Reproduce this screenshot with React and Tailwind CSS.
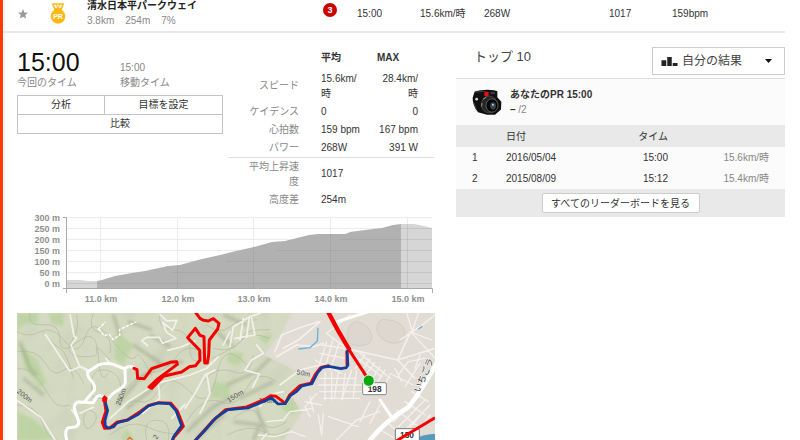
import React from "react";

const leaders = [
  { rank: 1, date: "2016/05/04", time: "15:00", speed: "15.6km/時" },
  { rank: 2, date: "2015/08/09", time: "15:12", speed: "15.4km/時" },
];

function Medal() {
  return (
    <svg viewBox="0 0 48 63" className="h-[21px] w-4" role="img" aria-label="PR">
      <path d="M5 1h38l-9 23H14z" fill="#fdbb1c" />
      <path d="M11 5h7l4 10h-6zM37 5h-7l-4 10h6zM20 5h8l-4 8z" fill="#fff6d8" />
      <circle cx="24" cy="40" r="22" fill="#fdb913" />
      <text x="24" y="48" textAnchor="middle" fontSize="21" fontWeight="bold" fill="#fff">PR</text>
    </svg>
  );
}

function Camera() {
  return (
    <svg viewBox="0 0 90 80" className="h-[27px] w-[30px]" aria-hidden="true">
      <path d="M8 7Q30 0 66 3l10 3v18l12 14-1 23-18 16-24 0-27-8Q1 48 2 26z" fill="#101010" />
      <path d="M9 9l30-3M5 40l8 20" stroke="#444" strokeWidth="3" />
      <circle cx="14" cy="30" r="4" fill="#ddd" />
      <rect x="37" y="8" width="13" height="13" rx="3" fill="#e1121b" />
      <path d="M55 8h14v7H55z" fill="#3b3b3b" />
      <ellipse cx="52" cy="46" rx="24" ry="25" fill="#262626" stroke="#555" strokeWidth="2" />
      <ellipse cx="60" cy="49" rx="18" ry="20" fill="#060606" stroke="#777" strokeWidth="2" />
      <ellipse cx="63" cy="50" rx="9" ry="11" fill="#35434a" />
      <path d="M59 43l7 3-3 6z" fill="#dbe6e8" />
      <path d="M33 30l10-6M30 42l-1 10" stroke="#999" strokeWidth="3" />
    </svg>
  );
}

function ActivityRow() {
  return (
    <header className="grid h-[33px] grid-cols-[33px_37px_236px_34px_63px_64px_125px_63px_1fr] border-b-2 border-[#e9e9e9] pl-[14px]">
      <div className="flex h-[28px] items-center pl-px text-[#999]">
        <svg viewBox="0 0 24 24" className="h-[10px] w-[10px]" fill="currentColor" aria-hidden="true">
          <path d="M12 0l3.300 8.300L24 9l-6.700 5.600L19.500 23 12 18.300 4.500 23l2.200-8.400L0 9l8.700-.7z" />
        </svg>
      </div>
      <div className="flex h-[27px] items-center"><Medal /></div>
      <div>
        <h1 className="text-[10px] font-bold leading-[11px] text-[#222]">清水日本平パークウェイ</h1>
        <p className="flex gap-[11px] leading-5 text-[#888]"><span>3.8km</span><span>254m</span><span>7%</span></p>
      </div>
      <div className="flex h-5 items-center">
        <span className="flex h-[14px] w-[14px] items-center justify-center rounded-full bg-[#c90000] text-[9px] font-bold text-white">3</span>
      </div>
      <span className="leading-[27px]">15:00</span>
      <span className="leading-[27px]">15.6km/時</span>
      <span className="leading-[27px]">268W</span>
      <span className="leading-[27px]">1017</span>
      <span className="leading-[27px]">159bpm</span>
    </header>
  );
}

function Times() {
  return (
    <section className="w-[206px] pt-[15px]">
      <div className="grid grid-cols-2 items-end">
        <strong className="text-[25px] font-normal leading-7 text-[#111]">15:00</strong>
        <span className="leading-4 text-[#888]">15:00</span>
      </div>
      <div className="grid grid-cols-2 leading-[14px] text-[#888]">
        <span>今回のタイム</span>
        <span>移動タイム</span>
      </div>
      <div className="mt-[5px] grid grid-cols-[86px_1fr] gap-px border border-[#c4c4c4] bg-[#c4c4c4] leading-4">
        <button type="button" className="h-[18px] bg-white">分析</button>
        <button type="button" className="h-[18px] bg-white">目標を設定</button>
        <button type="button" className="col-span-2 h-[18px] bg-white">比較</button>
      </div>
    </section>
  );
}

function Stats() {
  return (
    <table className="mt-[13px] w-[205px] table-fixed leading-[15px]">
      <thead>
        <tr className="h-[23px] align-top text-left">
          <td className="w-[92px]" />
          <th scope="col" className="w-[48px] pt-1 font-bold">平均</th>
          <th scope="col" className="w-[65px] pl-2 pt-1 font-bold">MAX</th>
        </tr>
      </thead>
      <tbody>
        <tr className="h-[33px]">
          <th scope="row" className="pr-[22px] text-right font-normal text-[#888]">スピード</th>
          <td>15.6km/<br />時</td>
          <td className="pr-4 text-right">28.4km/<br />時</td>
        </tr>
        <tr className="h-[18px]">
          <th scope="row" className="pr-[22px] text-right font-normal text-[#888]">ケイデンス</th>
          <td>0</td>
          <td className="pr-4 text-right">0</td>
        </tr>
        <tr className="h-[18px]">
          <th scope="row" className="pr-[22px] text-right font-normal text-[#888]">心拍数</th>
          <td className="whitespace-nowrap">159 bpm</td>
          <td className="whitespace-nowrap pr-4 text-right">167 bpm</td>
        </tr>
        <tr className="h-[19px] border-b border-[#ddd]">
          <th scope="row" className="pr-[22px] text-right font-normal text-[#888]">パワー</th>
          <td>268W</td>
          <td className="pr-4 text-right">391 W</td>
        </tr>
        <tr className="h-[33px]">
          <th scope="row" className="pr-[22px] text-right font-normal text-[#888]">平均上昇速<br />度</th>
          <td>1017</td>
          <td />
        </tr>
        <tr className="h-[18px]">
          <th scope="row" className="pr-[22px] text-right font-normal text-[#888]">高度差</th>
          <td>254m</td>
          <td />
        </tr>
      </tbody>
    </table>
  );
}

function Elevation() {
  const levels = [300, 250, 200, 150, 100, 50, 0];
  const marks = [["11.0 km", 101], ["12.0 km", 178], ["13.0 km", 254], ["14.0 km", 331], ["15.0 km", 408]];
  return (
    <svg viewBox="17 208 418 105" className="block w-full" role="img" aria-label="標高">
      <g stroke="#ececec" strokeWidth="1">
        {levels.map((v, i) => <path key={v} d={`M67 ${217.5 + i * 11}H432`} />)}
        {marks.map(([t, x]) => <path key={t} d={`M${x - 0.5} 217V288`} />)}
      </g>
      <path d="M67 280L79 280 89 281 97 281V288H67z" fill="#d6d6d6" />
      <path d="M97 281L102 280 115 276 132 273 145 271 168 266 180 265 198 260 220 255 236 251 254 247 272 242 285 241 309 235 318 234 345 234 348 233 350 232 365 230 382 228 393 225 401 224V288H97z" fill="#b1b1b1" />
      <path d="M401 224L414 224 424 226 432 228V288H401z" fill="#d6d6d6" />
      <g stroke="#888" strokeOpacity=".22" strokeWidth="1">
        <path d="M401 228.500H432M340 239.500H432M277 250.500H432M226 261.500H432M172 272.500H432M67 283.500H432M177.500 265V288M253.500 247V288M330.500 234V288M407.500 224V288" />
      </g>
      <path d="M63 217.500H67M66.500 217V293M63 288.500H432.500V293" fill="none" stroke="#aaa" />
      <g fill="#909090" fontSize="9" fontWeight="bold">
        {levels.map((v, i) => <text key={v} x="60" y={221 + i * 11} textAnchor="end">{v} m</text>)}
        {marks.map(([t, x]) => <text key={t} x={x} y="302" textAnchor="middle">{t}</text>)}
      </g>
    </svg>
  );
}

function RouteMap() {
  return (
    <svg viewBox="51 24 1254 381" className="block w-full" role="img" aria-label="ルートマップ">
      <defs>
        <filter id="soft" x="-20%" y="-20%" width="140%" height="140%"><feGaussianBlur stdDeviation="5" /></filter>
        <filter id="relief" x="0" y="0" width="100%" height="100%">
          <feTurbulence type="fractalNoise" baseFrequency="0.010 0.008" numOctaves="2" seed="8" />
          <feColorMatrix values="0 0 0 0 0  0 0 0 0 0  0 0 0 0 0  1 0 0 0 0" />
          <feDiffuseLighting surfaceScale="30" lightingColor="#e4e8d2"><feDistantLight azimuth="225" elevation="65" /></feDiffuseLighting>
        </filter>
        <clipPath id="hills"><path d="M51 24H875L845 80 790 150 880 195 930 235 870 270 905 320 850 405H51z" /></clipPath>
      </defs>
      <rect x="51" y="24" width="1254" height="381" fill="#e1dcd4" />
      <path d="M51 24H875L845 80 790 150 880 195 930 235 870 270 905 320 850 405H51z" fill="#d3d9bf" filter="url(#soft)" />
      <g clipPath="url(#hills)">
        <rect x="51" y="24" width="860" height="381" fill="#d3d9bf" />
        <rect x="51" y="24" width="860" height="381" filter="url(#relief)" opacity=".14" />
        <g fill="#b7d29c" opacity=".75" filter="url(#soft)">
          <path d="M51 24h60l5 26-50 10-15 20zM145 24h45v40l-35-8zM60 120l50 45 30 70-20 15-45-60zM350 80l50 40-30 60-28-20zM80 190l45 20-20 20zM51 320l45 20 70 65H51zM640 230l50 10v40h-60zM770 95l50-8-20 30zM690 140l40 5-10 35-40-10zM840 310l45-45 10 50-20 15zM380 370l25 35h-45z" />
        </g>
        <g fill="none" stroke="#8e9978" strokeWidth="10" opacity=".42" filter="url(#soft)">
          <path d="M340 30l20 60M385 50l70 25M450 90l60 35M350 300l70-80 60-40 70-10M380 310l80-60M560 380l80-75 50-25M590 400l80-70M680 240l90-40 80-80M720 280l100-50M700 350l80 10-20 45M650 80l50 45M60 110l30 80 20 20M70 220l60 50M400 120l90 60M740 60l-70-30M770 310l30 80" />
        </g>
        <g fill="none" stroke="#aab399" strokeWidth="2" opacity=".8">
          <path d="M51 80q35 20 70 0t75 30 60-15 80 10 70 50 50 60M90 24q-10 40 40 35t50 45 55 5 60 45 30 50M51 140q60-10 85 35t55 20 60 40M51 190q45 0 70 40t40 60 50 10M280 24q-20 50 20 60t30 60M230 30q10 40-15 80t30 45 45-20 40 30" />
          <path d="M275 225q5-35 40-30t45 35-35 45-50-10zM250 340q10-35 30-20t-3 42-27-22zM350 320q40-40 70-30t60-40 90 10 80-50 90-30M330 390q60-50 110-25t100 20M440 405q-15-60 30-60t35 60M370 270q30-60 80-65t80-50 80-10M480 24q-10 50 40 50t50 60 80 20 80-60 80-20M620 60q40 30 70 5t80-20M640 130q55 15 80-20t90-10M610 230q40-50 90-30t60-50M560 350q50-80 100-60t80-40 90-20M700 340q60-50 80 0t80 10M680 390q70-35 110-10t80-10M51 300q60 0 75 50t45 55M130 80q30 40 50 50t40 90" />
        </g>
      </g>
      <g fill="#ddd8cf" stroke="#cbc6be" strokeWidth="2"><path d="M1130 75q0-40 35-30 42 3 50 35 2 35-35 35-40-5-50-40zM1040 90q10-50 40-38t35 40-35 30-40-32z" /></g>

      <g fill="none" stroke="#f4f1ed" strokeLinejoin="round" strokeLinecap="round">
        <g strokeWidth="5">
          <path d="M210 28L222 94 230 98 213 120 238 182 263 194M136 88L209 198 240 185 263 198M317 160L332 178M51 286L123 337 165 405" />
          <path d="M480 28L500 48 530 46 518 76 488 52 500 82 528 100 488 115 478 97 440 97 425 107 443 122M503 136L543 126 585 108M690 80L670 120M330 340L385 290 470 235 570 210 620 190 655 155M620 205L630 265 600 325M475 235L479 280 429 325M240 325L280 307M555 310L585 265 615 210 645 195M240 350L215 315M515 340L555 298" />
          <path d="M690 125l10-60 50-30 30-10M705 100l60-10-10-50M720 105l10-65M740 97l8-60M735 195l20-30 35-20-20-25M738 197l40 10-20 40M825 140l20-50 50-20 60-20M850 130l45-25 65-55M830 155l60-35 50 5 30-10M850 260l-25 5-30 15-15 25M840 240l60-45 60-15" />
        </g>
        <g strokeWidth="4">
          <path d="M965 120l70 10M960 145l75 15M945 165l80 40M1000 100l-25 90M1018 115l-28 80M980 110l-22 70M975 200l0 85M995 200l0 85M1015 200l-12 80M1035 205l-8 75M960 220h110M955 240h130M960 260h125M970 280h110M1055 195l-30 90M1070 195l-10 80M950 265l-35 40 15 30M930 275l10 45M915 290l50 10M800 350l50-5 20-25 70-10M775 390l50 5 50-15 40 15M800 385l-15 20M955 330l10 60M970 325l-5 60M985 335l90 30M1010 405l60-60 70-25" />
          <path d="M1060 150l85 65M1080 145l90 75M1094 150l-28 40M1110 160l-28 45M1125 172l-30 40M1140 185l-25 40M1155 195l-25 40M1170 210l-25 45M1130 265h-25M1110 290l-30 60M1140 300l-30 55M1180 350l80-80M1195 365l80-80M1210 380l80-80M1160 350l60 55M1190 315l65 50M1215 290l60 40M1235 260l50 30M1270 320l-70 85M1290 330l-55 75M1140 375l55 30" />
          <path d="M1040 130l-60-45 70-55M1220 24l20 65 65 70M1200 105l60-40 45-35M1235 85l20-60M1230 80l65 25M1195 210l30-40 50-10M1205 230l-20-40M1215 245l45-70M1170 205l70 35M1260 150l-15 40" />
        </g>
        <path d="M1048 133L1193 165 1305 130M1193 165L1230 84M1193 165L1245 220" strokeWidth="5" />
      </g>
      <g fill="none" stroke="#fff" strokeLinejoin="round" strokeLinecap="round">
        <path d="M400 186Q374 182 375 196L376 232Q375 245 345 261 332 270 325 281 315 276 300 271 290 272 280 293L235 291Q221 296 223 311L235 346Q239 362 225 366L203 369Q193 378 200 405" strokeWidth="9" />
        <path d="M375 192L340 178Q315 172 295 180L263 201Q262 210 267 219L280 235Q286 247 283 256L255 289M1005 52L1115 17M1140 285L1172 332" strokeWidth="9" />
        <path d="M1110 405Q1160 345 1225 307 1255 270 1320 159" strokeWidth="14" />
        <path d="M295 72l20-20M297 72l15 20 16-4 10 16 22-14-2-16 50-23" strokeWidth="4" strokeDasharray="7 7" />
      </g>
      <g fill="none" stroke="#68b0e0" strokeWidth="4" strokeLinejoin="round"><path d="M895 132L930 128 952 108 954 68M1255 72l12-8" /></g>
      <path d="M1235 405q40-20 70-18v18z" fill="#5599bd" />

      <g fill="#555" fontSize="21">
        <text transform="translate(49 262) rotate(38)">200m</text>
        <text transform="translate(360 302) rotate(-69)">250m</text>
        <text transform="translate(687 293) rotate(-32)">150m</text>
        <text transform="translate(889 208) rotate(10)">50m</text>
        <text transform="translate(776 295)">100m</text>
        <text transform="translate(470 404) rotate(-60)">2</text>
      </g>
      <path d="M382 405l7-8 9 8" fill="none" stroke="#ee6a25" strokeWidth="4" />
      <g fill="none" stroke="#f50000" strokeWidth="9" strokeLinejoin="round" strokeLinecap="round">
        <path d="M588 24L600 40 611 46 625 48 640 41 657 55 653 72 628 105 626 150 622 174 614 174 612 95 600 91 586 70 563 98 599 136 600 165 587 182 568 185 545 201 490 214 455 250 447 246 475 220 532 178 530 170 514 171 455 191 433 221 413 220 411 194 402 190" />
        <path d="M313 285L318 318 307 352 314 370 330 369 350 352 382 345 420 320 447 301 475 293 513 295 532 318 550 364 520 399 518 412M583 410L640 346 677 314 740 306 792 284 812 272 828 274 856 295M856 295L869 270 900 242 932 235 946 208 962 188 985 182M1045 131L1105 223M1041 180V140" />
        <path d="M984 20l32 60 31 52" strokeWidth="13" />
      </g>
      <path d="M316 292L323 316 315 346 316 362 323 369 340 366 352 353 383 345 415 328 445 303 475 294 509 296 528 317 545 362 522 393 514 412M582 410L613 378 648 338 684 314 744 309 801 285 814 278 834 297 855 296 871 272 888 261 905 243 936 236 953 203 967 187 986 184 1023 191 1039 188 1044 180 1041 139" fill="none" stroke="#123e9e" strokeWidth="8" strokeLinejoin="round" strokeLinecap="round" />
      <path d="M313 270l10 8-3 14-13-2-1-10z" fill="#f50000" />
      <rect x="1088" y="233" width="71" height="36" rx="4" fill="#fff" stroke="#888" strokeWidth="3" />
      <text x="1124" y="261" textAnchor="middle" fontSize="25" fontWeight="bold" fill="#333">198</text>
      <rect x="1186" y="371" width="72" height="42" rx="4" fill="#fff" stroke="#777" strokeWidth="3" />
      <text x="1221" y="398" textAnchor="middle" fontSize="25" fontWeight="bold" fill="#333">150</text>
      <path d="M1190 407l115-69" stroke="#f50000" strokeWidth="9" />
      <circle cx="1106" cy="227" r="17" fill="#07aa0b" stroke="#fff" strokeWidth="3" />
      <text transform="translate(1258 264) rotate(-66)" fontSize="27" fill="#333" stroke="#fff" strokeWidth="3" paintOrder="stroke">いちごラ</text>
    </svg>
  );
}

function Leaderboard() {
  return (
    <section className="min-w-0 flex-1 pt-[14px]">
      <div className="flex h-[31px] justify-between pl-[18px]">
        <h2 className="text-[13px] leading-5 text-[#444]">トップ 10</h2>
        <div className="grid h-[28px] w-[133px] grid-cols-1 items-center border border-[#ccc] bg-white">
          <select aria-label="結果" className="col-start-1 row-start-1 h-[26px] w-full appearance-none bg-transparent pl-[29px] text-[12px] text-[#444]">
            <option>自分の結果</option>
          </select>
          <span className="pointer-events-none col-start-1 row-start-1 flex items-center justify-between pl-2 pr-3">
            <svg viewBox="0 0 50 28" className="h-[9px] w-[17px]" aria-hidden="true"><path d="M0 10h15v18H0zM18 0h14v28H18zM35 19h15v9H35z" fill="#222" /></svg>
            <svg viewBox="0 0 18 10" className="h-1 w-[7px]" aria-hidden="true"><path d="M0 0h18L9 10z" fill="#111" /></svg>
          </span>
        </div>
      </div>
      <div className="flex h-[47px] items-center gap-2 border-t border-[#ddd] bg-[#fbfbfb] pl-4">
        <Camera />
        <div className="leading-[15px]">
          <p className="font-bold text-[#333]">あなたのPR 15:00</p>
          <p className="text-[#888]"><b className="text-[#333]">–</b> /2</p>
        </div>
      </div>
      <table className="w-full table-fixed bg-[#fbfbfb]">
        <thead className="bg-[#e9e9e9]">
          <tr className="h-[22px] text-left">
            <td className="w-[50px]" />
            <th scope="col" className="w-[100px] font-normal">日付</th>
            <th scope="col" className="w-[62px] text-right font-normal">タイム</th>
            <td />
          </tr>
        </thead>
        <tbody>
          {leaders.map((r) => (
            <tr key={r.rank} className="h-[21px]">
              <td className="pl-4">{r.rank}</td>
              <td>{r.date}</td>
              <td className="text-right">{r.time}</td>
              <td className="pr-4 text-right text-[#888]">{r.speed}</td>
            </tr>
          ))}
        </tbody>
      </table>
      <div className="flex h-7 items-center justify-center bg-[#e9e9e9]">
        <button type="button" className="h-5 w-[158px] rounded-xs border border-[#ccc] bg-white">すべてのリーダーボードを見る</button>
      </div>
    </section>
  );
}

export default function App() {
  return (
    <div className="bg-white pr-[15px] font-['Liberation_Sans','Noto_Sans_CJK_JP',sans-serif] text-[10px] leading-[15px] text-[#333]">
      <main className="border-l-3 border-[#ff3c00]">
        <ActivityRow />
        <div className="flex gap-[21px] pl-[14px]">
          <div className="w-[418px] shrink-0">
            <div className="flex h-[175px] gap-[6px]">
              <Times />
              <Stats />
            </div>
            <Elevation />
            <RouteMap />
          </div>
          <Leaderboard />
        </div>
      </main>
    </div>
  );
}
